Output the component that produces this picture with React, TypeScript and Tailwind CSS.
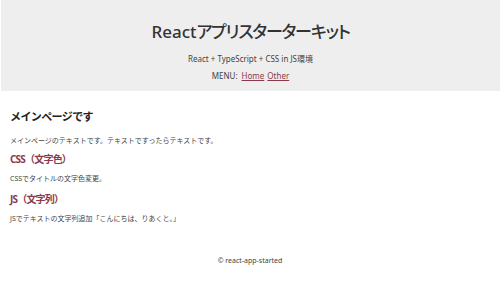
export default function App() {
  return (
    <div
      className="w-[500px] h-[298px] bg-white text-[#333]"
      style={{ fontFamily: '"Noto Sans", "Noto Sans CJK JP", sans-serif' }}
    >
      <header className="ml-px bg-[#eeeeee] h-[91px] flex flex-col items-center pt-[18px]">
        <h1 className="text-[17px] leading-[28px] font-medium text-[#333] [font-feature-settings:'palt']">
          React<span className="tracking-[-1.2px]">アプリスターターキット</span>
        </h1>
        <p className="mt-[7px] text-[8px] leading-[12px] text-[#444]">React + TypeScript + CSS in JS環境</p>
        <nav className="mt-[5px] text-[8px] leading-[12px] text-[#444] flex gap-[3px]">
          <span>MENU:</span>
          <a className="ml-[1px] text-[#8a3a4c] underline">Home</a>
          <a className="text-[#8a3a4c] underline">Other</a>
        </nav>
      </header>
      <main className="px-[10px] pt-[18px]">
        <h2 className="text-[11px] leading-[16px] font-bold tracking-[-0.6px] text-[#222]">メインページです</h2>
        <p className="mt-[11px] text-[7px] leading-[10px] text-[#444]">メインページのテキストです。テキストですったらテキストです。</p>
        <h3 className="mt-[6px] text-[10px] leading-[14px] font-bold tracking-[-0.8px] text-[#8a3a4c]">CSS（文字色）</h3>
        <p className="mt-[8px] text-[7px] leading-[10px] text-[#444]">CSSでタイトルの文字色変更。</p>
        <h3 className="mt-[8px] text-[10px] leading-[14px] font-bold tracking-[-0.8px] text-[#8a3a4c]">JS（文字列）</h3>
        <p className="mt-[8px] text-[7px] leading-[10px] text-[#444]">JSでテキストの文字列追加「こんにちは、りあくと。」</p>
      </main>
      <footer className="mt-[32px] text-center text-[7px] leading-[10px] text-[#444]">© react-app-started</footer>
    </div>
  );
}
